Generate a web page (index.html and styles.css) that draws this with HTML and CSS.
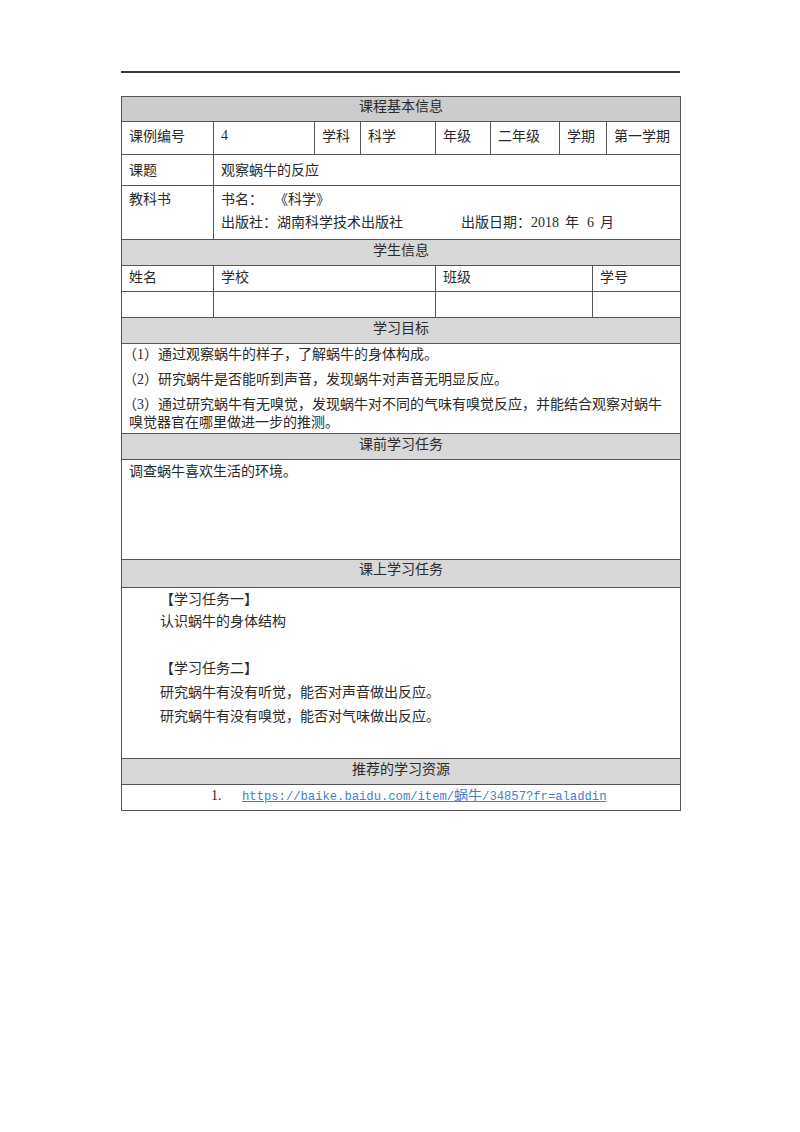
FILE: index.html
```html
<!DOCTYPE html>
<html lang="zh-CN">
<head>
<meta charset="utf-8">
<title>课程基本信息</title>
<link rel="stylesheet" href="styles.css">
</head>
<body>
<div class="page">
  <div class="rule"></div>
  <table class="sheet">
    <colgroup>
      <col class="c1"><col class="c2"><col class="c3"><col class="c4"><col class="c5"><col class="c6"><col class="c7"><col class="c8"><col class="c9">
    </colgroup>
    <tr class="h-first"><td colspan="9" class="head dark">课程基本信息</td></tr>
    <tr class="r-info">
      <td>课例编号</td>
      <td class="num">4</td>
      <td>学科</td>
      <td>科学</td>
      <td>年级</td>
      <td>二年级</td>
      <td colspan="2">学期</td>
      <td>第一学期</td>
    </tr>
    <tr class="r-topic">
      <td>课题</td>
      <td colspan="8">观察蜗牛的反应</td>
    </tr>
    <tr class="r-book">
      <td>教科书</td>
      <td colspan="8">
        <p class="line">书名：<span class="book">《科学》</span></p>
        <p class="line second">出版社：湖南科学技术出版社<span class="date">出版日期：<span class="num yr">2018</span>年<span class="num mo">6</span>月</span></p>
      </td>
    </tr>
    <tr class="h-row"><td colspan="9" class="head">学生信息</td></tr>
    <tr class="r-stu">
      <td>姓名</td>
      <td colspan="3">学校</td>
      <td colspan="3">班级</td>
      <td colspan="2">学号</td>
    </tr>
    <tr class="r-stu">
      <td></td>
      <td colspan="3"></td>
      <td colspan="3"></td>
      <td colspan="2"></td>
    </tr>
    <tr class="h-row"><td colspan="9" class="head">学习目标</td></tr>
    <tr class="r-goals">
      <td colspan="9">
        <p class="goal">（<span class="num">1</span>）通过观察蜗牛的样子，了解蜗牛的身体构成。</p>
        <p class="goal">（<span class="num">2</span>）研究蜗牛是否能听到声音，发现蜗牛对声音无明显反应。</p>
        <p class="goal">（<span class="num">3</span>）通过研究蜗牛有无嗅觉，发现蜗牛对不同的气味有嗅觉反应，并能结合观察对蜗牛<br>嗅觉器官在哪里做进一步的推测。</p>
      </td>
    </tr>
    <tr class="h-row"><td colspan="9" class="head">课前学习任务</td></tr>
    <tr class="r-pre">
      <td colspan="9">调查蜗牛喜欢生活的环境。</td>
    </tr>
    <tr class="h-row tall"><td colspan="9" class="head">课上学习任务</td></tr>
    <tr class="r-tasks">
      <td colspan="9">
        <p class="task t1">【学习任务一】</p>
        <p class="task t2">认识蜗牛的身体结构</p>
        <p class="task blank"></p>
        <p class="task">【学习任务二】</p>
        <p class="task">研究蜗牛有没有听觉，能否对声音做出反应。</p>
        <p class="task">研究蜗牛有没有嗅觉，能否对气味做出反应。</p>
      </td>
    </tr>
    <tr class="h-row"><td colspan="9" class="head">推荐的学习资源</td></tr>
    <tr class="r-link">
      <td colspan="9">
        <div class="res">
          <span class="res-num">1.</span>
          <a class="res-link" href="#">https://baike.baidu.com/item/<span class="cjk">蜗牛</span>/34857?fr=aladdin</a>
        </div>
      </td>
    </tr>
  </table>
</div>
</body>
</html>
```

FILE: styles.css
```css
html, body {
  margin: 0;
  padding: 0;
  background: #ffffff;
}

body {
  font-family: "Liberation Serif", "Noto Sans CJK SC", serif;
  font-size: 14px;
  color: #2a2a2a;
}

.page {
  width: 559px;
  margin-left: 121px;
  padding-top: 71px;
}

.rule {
  height: 2px;
  background: #3a3a3a;
  margin-bottom: 23px;
}

.sheet {
  width: 559px;
  border-collapse: collapse;
  table-layout: fixed;
}

.c1 { width: 92px; }
.c2 { width: 101px; }
.c3 { width: 46px; }
.c4 { width: 75px; }
.c5 { width: 55px; }
.c6 { width: 69px; }
.c7 { width: 33px; }
.c8 { width: 14px; }
.c9 { width: 74px; }

.sheet td {
  border: 1px solid #555555;
  vertical-align: top;
  padding: 0 7px;
  line-height: 17px;
  white-space: nowrap;
  font-family: "Noto Sans CJK SC", "Liberation Serif", sans-serif;
}

.sheet td.num,
.num {
  font-family: "Liberation Serif", serif;
}

.head {
  background: #d8d8d8;
  text-align: center;
  padding-top: 1px !important;
}

.head.dark {
  background: #cccccc;
}

.h-first { height: 25px; }
.h-first .head { padding-top: 0 !important; }
.h-row { height: 26px; }
.h-row.tall { height: 28px; }
.h-row.tall .head { padding-top: 0 !important; }

.r-info { height: 33px; }
.r-info td { padding-top: 5px; }

.r-topic { height: 31px; }
.r-topic td { padding-top: 6px; }

.r-book { height: 54px; }
.r-book td { padding-top: 4px; }

.line {
  margin: 0;
}

.line.second {
  margin-top: 6px;
}

.book {
  margin-left: 18px;
}

.date {
  margin-left: 58px;
}

.yr {
  margin: 0 6px 0 0;
}

.mo {
  margin: 0 6px 0 8px;
}

.r-stu { height: 26px; }
.r-stu td { padding-top: 2px; }

.r-goals { height: 90px; }
.r-goals td {
  padding-top: 1px;
  white-space: normal;
}

.goal {
  margin: 0 0 7px;
  text-indent: -6px;
}

.goal:last-child {
  margin-bottom: 0;
}

.r-pre { height: 100px; }
.r-pre td { padding-top: 2px; }

.r-tasks { height: 171px; }
.r-tasks td {
  padding-top: 2px;
  padding-left: 38px;
}

.task {
  margin: 0 0 7px;
  min-height: 17px;
}

.task:last-child {
  margin-bottom: 0;
}

.task.t1 { margin-bottom: 5px; }
.task.blank { margin-bottom: 6px; }

.r-link { height: 26px; }
.r-link td { padding-top: 1px; }

.res {
  display: flex;
  align-items: baseline;
  padding-left: 82px;
}

.res-num {
  font-family: "Liberation Serif", serif;
  width: 31px;
}

.res-link {
  font-family: "Liberation Mono", monospace;
  font-size: 12.2px;
  color: #3f7fd6;
  text-decoration: underline;
}

.res-link .cjk {
  font-family: "Noto Sans CJK SC", sans-serif;
  font-size: 14px;
}
```
